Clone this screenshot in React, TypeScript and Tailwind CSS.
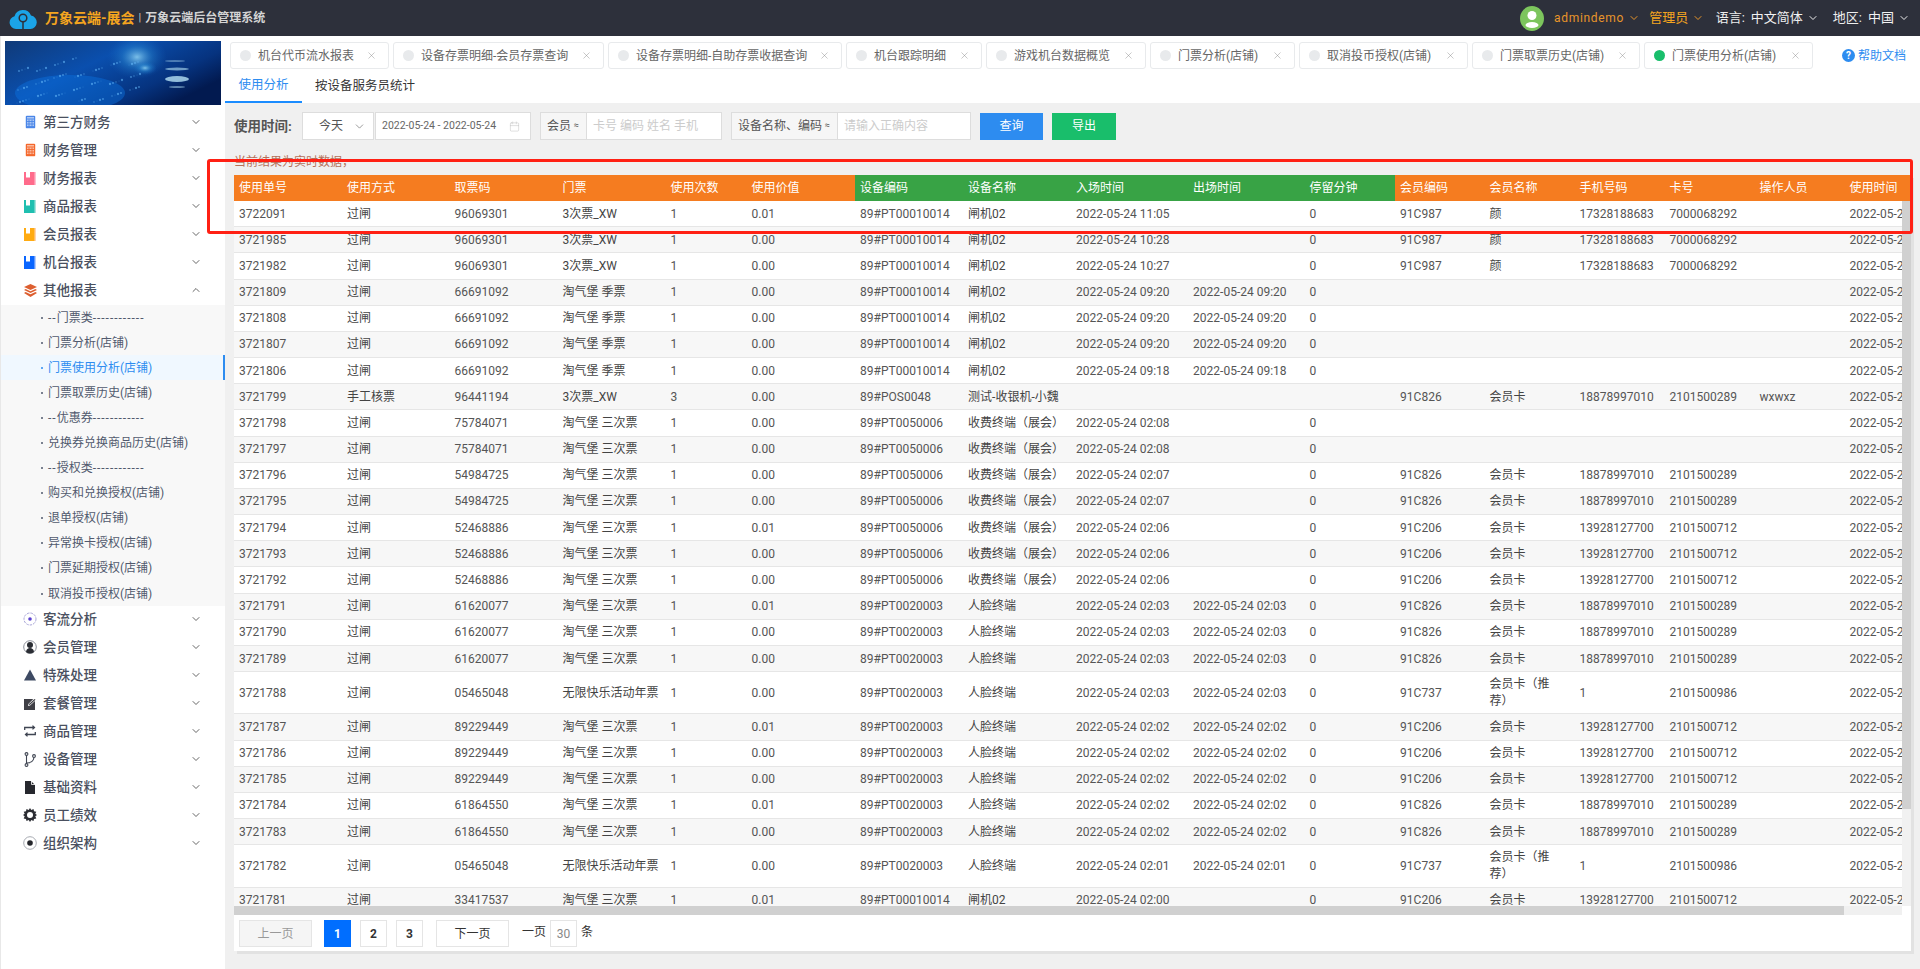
import React from "react";
import { Calendar, ChevronDown, ChevronUp, X } from "lucide-react";

const Calc = ({ c }: { c: string }) => (
  <svg width="11" height="14" viewBox="0 0 11 14">
    <rect x="0.5" y="0.5" width="10" height="13" rx="1.5" fill={c} opacity="0.45" />
    <rect x="1.5" y="1.5" width="8" height="11" fill="none" stroke={c} />
    <path d="M2 4h7M2 6.5h7M2 9h7M2 11.5h7M4 4.5v7M7 4.5v7" stroke={c} strokeWidth="0.9" />
  </svg>
);

const Book = ({ c, l }: { c: string; l: string }) => (
  <svg width="12" height="13" viewBox="0 0 12 13">
    <rect width="12" height="13" fill={l} />
    <rect width="10.5" height="13" fill={c} />
    <rect x="2" y="0" width="4" height="5.5" fill="#fff" />
  </svg>
);

const D = "#3f4552";
const menuIcons: Record<string, React.ReactNode> = {
  第三方财务: <Calc c="#4a86e8" />,
  财务管理: <Calc c="#f4682c" />,
  财务报表: <Book c="#ff6b8b" l="#ffc0cf" />,
  商品报表: <Book c="#1fbfb0" l="#a8e3dd" />,
  会员报表: <Book c="#ffab12" l="#ffd3b0" />,
  机台报表: <Book c="#0a66ff" l="#b7cdfb" />,
  其他报表: (
    <svg width="13" height="13" viewBox="0 0 13 13" fill="#dd5f30">
      <path d="M6.5 0 13 3 6.5 6 0 3z" />
      <path d="M1.6 5 6.5 7.3 11.4 5 13 6 6.5 9 0 6z" />
      <path d="M1.6 8 6.5 10.3 11.4 8 13 9.1 6.5 13 0 9.1z" />
    </svg>
  ),
  客流分析: (
    <svg width="14" height="14" viewBox="0 0 14 14">
      <circle cx="7" cy="7" r="6" fill="none" stroke="#a9a6d8" strokeDasharray="2.5 1" />
      <circle cx="7" cy="7" r="1.8" fill="#5a3fd0" />
    </svg>
  ),
  会员管理: (
    <svg width="14" height="14" viewBox="0 0 14 14">
      <circle cx="7" cy="7" r="6.3" fill="#fff" stroke="#8b8f98" />
      <circle cx="7" cy="5" r="3" fill="#2a2d33" />
      <path d="M3 12c.4-3 2-4 4-4s3.600 1 4 4a6 6 0 0 1-8 0z" fill="#2a2d33" />
    </svg>
  ),
  特殊处理: (
    <svg width="12" height="12" viewBox="0 0 14 13">
      <path d="M7 0 14 13H0z" fill="#3e4a63" />
    </svg>
  ),
  套餐管理: (
    <svg width="13" height="13" viewBox="0 0 13 13">
      <rect y="2" width="11" height="11" fill="#3f3f46" />
      <path d="m4 9 .4-2L10 1.300 12 3 6 8.600z" fill="#fff" />
      <path d="m4.800 8 .2-1L10.500 2l1 .8L6 7.800z" fill="#3f3f46" />
    </svg>
  ),
  商品管理: (
    <svg width="12" height="12" viewBox="0 0 12 12" fill="none" stroke={D} strokeWidth="1.3">
      <path d="M.7 5V2.500h9.500M8.500.6l2 1.900-2 1.900M11.300 7v2.500H1.800M3.500 7.600l-2 1.900 2 1.900" />
    </svg>
  ),
  设备管理: (
    <svg width="12" height="15" viewBox="0 0 12 15" fill="none" stroke={D} strokeWidth="1.1">
      <circle cx="2.500" cy="2" r="1.400" />
      <circle cx="2.500" cy="13" r="1.400" />
      <circle cx="10" cy="4" r="1.400" />
      <path d="M2.500 3.500v8M2.500 11c5 0 7-2 7.500-5.500" />
    </svg>
  ),
  基础资料: (
    <svg width="10" height="13" viewBox="0 0 10 13">
      <path d="M0 0h6l4 4v9H0z" fill="#26282e" />
      <path d="M6.500 0v3.500H10" fill="none" stroke="#fff" strokeWidth="0.8" />
    </svg>
  ),
  员工绩效: (
    <svg width="14" height="14" viewBox="0 0 14 14">
      <path d="M7 0 8.300 2 10.500 1 11 3.200 13.300 3.700 12.300 5.800 14 7 12.300 8.300 13.300 10.400 11 10.900 10.500 13 8.300 12.100 7 14 5.700 12.100 3.500 13 3 10.900.7 10.400 1.700 8.300 0 7 1.700 5.800.7 3.700 3 3.200 3.500 1 5.700 2z" fill="#2b2d33" />
      <circle cx="7" cy="7" r="3" fill="#fff" />
    </svg>
  ),
  组织架构: (
    <svg width="14" height="14" viewBox="0 0 14 14">
      <circle cx="7" cy="7" r="6.300" fill="#fff" stroke="#a8abb2" />
      <circle cx="7" cy="7" r="2.800" fill="#24262b" />
    </svg>
  ),
};

const topMenus = ["第三方财务", "财务管理", "财务报表", "商品报表", "会员报表", "机台报表"];
const bottomMenus = ["客流分析", "会员管理", "特殊处理", "套餐管理", "商品管理", "设备管理", "基础资料", "员工绩效", "组织架构"];
const subMenus = [
  { label: "门票类", dash: true },
  { label: "门票分析(店铺)" },
  { label: "门票使用分析(店铺)", active: true },
  { label: "门票取票历史(店铺)" },
  { label: "优惠券", dash: true },
  { label: "兑换券兑换商品历史(店铺)" },
  { label: "授权类", dash: true },
  { label: "购买和兑换授权(店铺)" },
  { label: "退单授权(店铺)" },
  { label: "异常换卡授权(店铺)" },
  { label: "门票延期授权(店铺)" },
  { label: "取消投币授权(店铺)" },
];

const tabs = [
  { label: "机台代币流水报表", w: "w-[159px]" },
  { label: "设备存票明细-会员存票查询", w: "w-[211px]" },
  { label: "设备存票明细-自助存票收据查询", w: "w-[234px]" },
  { label: "机台跟踪明细", w: "w-[136px]" },
  { label: "游戏机台数据概览", w: "w-[160px]" },
  { label: "门票分析(店铺)", w: "w-[145px]" },
  { label: "取消投币授权(店铺)", w: "w-[169px]" },
  { label: "门票取票历史(店铺)", w: "w-[168px]" },
  { label: "门票使用分析(店铺)", w: "w-[169px]", active: true },
];

const columns = [
  { t: "使用单号", c: "bg-[#f57c20]" },
  { t: "使用方式", c: "bg-[#f57c20]" },
  { t: "取票码", c: "bg-[#f57c20]" },
  { t: "门票", c: "bg-[#f57c20]" },
  { t: "使用次数", c: "bg-[#f57c20]" },
  { t: "使用价值", c: "bg-[#f57c20]" },
  { t: "设备编码", c: "bg-[#38a345]" },
  { t: "设备名称", c: "bg-[#38a345]" },
  { t: "入场时间", c: "bg-[#38a345]" },
  { t: "出场时间", c: "bg-[#38a345]" },
  { t: "停留分钟", c: "bg-[#38a345]" },
  { t: "会员编码", c: "bg-[#f57c20]" },
  { t: "会员名称", c: "bg-[#f57c20]" },
  { t: "手机号码", c: "bg-[#f57c20]" },
  { t: "卡号", c: "bg-[#f57c20]" },
  { t: "操作人员", c: "bg-[#f57c20]" },
  { t: "使用时间", c: "bg-[#f57c20]" },
];

const gridCols =
  "grid grid-cols-[108px_107.5px_108px_108px_81px_108.6px_108px_108px_117px_116.5px_90.500px_89.500px_90px_90px_90px_90px_100px]";

const yan = ["91C987", "颜", "17328188683", "7000068292"];
const m826 = ["91C826", "会员卡", "18878997010", "2101500289"];
const m206 = ["91C206", "会员卡", "13928127700", "2101500712"];
const m737 = ["91C737", "会员卡（推荐）", "1", "2101500986"];
const none = ["", "", "", ""];
const gate = ["89#PT00010014", "闸机02"];
const fee = ["89#PT0050006", "收费终端（展会）"];
const face = ["89#PT0020003", "人脸终端"];
const day = "2022-05-24 ";

const row = (
  no: string,
  code: string,
  ticket: string,
  value: string,
  dev: string[],
  tin: string,
  tout: string,
  mem: string[]
) => ["372" + no, "过闸", code, ticket, "1", value, ...dev, day + tin, tout && day + tout, "0", ...mem, "", day + tin];

const j = "淘气堡 季票";
const s = "淘气堡 三次票";
const w = "3次票_XW";
const u = "无限快乐活动年票";

const rows: string[][] = [
  row("2091", "96069301", w, "0.01", gate, "11:05", "", yan),
  row("1985", "96069301", w, "0.00", gate, "10:28", "", yan),
  row("1982", "96069301", w, "0.00", gate, "10:27", "", yan),
  row("1809", "66691092", j, "0.00", gate, "09:20", "09:20", none),
  row("1808", "66691092", j, "0.00", gate, "09:20", "09:20", none),
  row("1807", "66691092", j, "0.00", gate, "09:20", "09:20", none),
  row("1806", "66691092", j, "0.00", gate, "09:18", "09:18", none),
  ["3721799", "手工核票", "96441194", w, "3", "0.00", "89#POS0048", "测试-收银机-小魏", "", "", "", ...m826, "wxwxz", day + "01:50"],
  row("1798", "75784071", s, "0.00", fee, "02:08", "", none),
  row("1797", "75784071", s, "0.00", fee, "02:08", "", none),
  row("1796", "54984725", s, "0.00", fee, "02:07", "", m826),
  row("1795", "54984725", s, "0.00", fee, "02:07", "", m826),
  row("1794", "52468886", s, "0.01", fee, "02:06", "", m206),
  row("1793", "52468886", s, "0.00", fee, "02:06", "", m206),
  row("1792", "52468886", s, "0.00", fee, "02:06", "", m206),
  row("1791", "61620077", s, "0.01", face, "02:03", "02:03", m826),
  row("1790", "61620077", s, "0.00", face, "02:03", "02:03", m826),
  row("1789", "61620077", s, "0.00", face, "02:03", "02:03", m826),
  row("1788", "05465048", u, "0.00", face, "02:03", "02:03", m737),
  row("1787", "89229449", s, "0.01", face, "02:02", "02:02", m206),
  row("1786", "89229449", s, "0.00", face, "02:02", "02:02", m206),
  row("1785", "89229449", s, "0.00", face, "02:02", "02:02", m206),
  row("1784", "61864550", s, "0.01", face, "02:02", "02:02", m826),
  row("1783", "61864550", s, "0.00", face, "02:02", "02:02", m826),
  row("1782", "05465048", u, "0.00", face, "02:01", "02:01", m737),
  row("1781", "33417537", s, "0.01", gate, "02:00", "", m206),
];

const stars = Array.from({ length: 90 }, (_, i) => ({
  x: (i * 37) % 130 + 6,
  y: 64 - ((i * 23) % 44) - (i % 3) * 2,
  r: 0.4 + (i % 4) * 0.25,
}));

const Banner = () => (
  <svg width="216" height="64" viewBox="0 0 216 64" className="block">
    <defs>
      <linearGradient id="bannerBg" x1="0" y1="0" x2="1" y2="0.6">
        <stop offset="0" stopColor="#103a78" />
        <stop offset="0.45" stopColor="#0a4fae" />
        <stop offset="0.8" stopColor="#06337f" />
        <stop offset="1" stopColor="#021a50" />
      </linearGradient>
      <radialGradient id="bannerGlow">
        <stop offset="0" stopColor="#8fd4f5" stopOpacity="0.85" />
        <stop offset="0.5" stopColor="#2d8fd8" stopOpacity="0.4" />
        <stop offset="1" stopColor="#1565c0" stopOpacity="0" />
      </radialGradient>
    </defs>
    <rect width="216" height="64" fill="url(#bannerBg)" />
    <ellipse cx="65" cy="52" rx="55" ry="18" fill="#0a70e0" opacity="0.45" />
    <ellipse cx="132" cy="16" rx="30" ry="22" fill="url(#bannerGlow)" />
    <ellipse cx="140" cy="27" rx="12" ry="7" fill="url(#bannerGlow)" />
    <ellipse cx="172" cy="38" rx="12" ry="3" fill="#b6e2f5" opacity="0.8" />
    <ellipse cx="172" cy="28" rx="12" ry="1.5" fill="#b6e2f5" opacity="0.6" />
    <ellipse cx="170" cy="20" rx="10" ry="1" fill="#b6e2f5" opacity="0.4" />
    <ellipse cx="172" cy="46" rx="8" ry="1" fill="#b6e2f5" opacity="0.5" />
    {stars.map((d, i) => (
      <circle key={i} cx={d.x} cy={d.y} r={d.r} fill="#6cc0ff" opacity={0.55} />
    ))}
  </svg>
);

const Logo = () => (
  <svg width="28" height="21" viewBox="0 0 28 21">
    <path d="M7 21a6.500 6.500 0 0 1-1.500-12.800A8.800 8.800 0 0 1 22 7.500 6.800 6.800 0 0 1 21.500 21z" fill="#1ba4e8" />
    <circle cx="14" cy="10" r="3.800" fill="none" stroke="#2d303b" strokeWidth="1.500" />
    <path d="M14 14v7" stroke="#2d303b" strokeWidth="1.500" />
  </svg>
);

const Head = () => (
  <header className="flex h-[36px] items-center justify-between bg-[#2d303b]">
    <div className="flex items-center pl-[9px]">
      <Logo />
      <span className="ml-[8px] text-[14px] font-bold text-[#f5a51f]">万象云端-展会</span>
      <span className="ml-[4px] text-[11px] text-[#c9c9c9]">|</span>
      <span className="ml-[4px] text-[12px] font-bold text-[#d4d4d4]">万象云端后台管理系统</span>
    </div>
    <div className="flex items-center pr-[10px] text-[13px]">
      <svg width="24" height="25" viewBox="0 0 24 25">
        <ellipse cx="12" cy="12.500" rx="12" ry="12.500" fill="#7cc55d" />
        <circle cx="12" cy="9.500" r="4.500" fill="#fff" />
        <ellipse cx="12" cy="19" rx="6.500" ry="3" fill="#fff" />
      </svg>
      <span className="ml-[10px] text-[12px] tracking-[0.7px] text-[#e8952a]">admindemo</span>
      <ChevronDown size={12} strokeWidth={2} className="ml-[4px] text-[#e8952a]" />
      <span className="ml-[9px] text-[#f5a51f]">管理员</span>
      <ChevronDown size={12} strokeWidth={2} className="ml-[4px] text-[#e8952a]" />
      <span className="ml-[11.500px] text-[#eee]">语言:</span>
      <span className="ml-[6px] text-[#f2f2f2]">中文简体</span>
      <ChevronDown size={12} strokeWidth={2} className="ml-[4px] text-[#eee]" />
      <span className="ml-[14px] text-[#eee]">地区:</span>
      <span className="ml-[6px] text-[#f2f2f2]">中国</span>
      <ChevronDown size={12} strokeWidth={2} className="ml-[4px] text-[#eee]" />
    </div>
  </header>
);

const MenuItem = ({ name, open }: { name: string; open?: boolean }) => (
  <div className="flex h-[28px] items-center text-[13.5px] font-medium text-[#4a5060]">
    <span className="ml-[24px] flex w-[18px] -translate-x-[4px] justify-center">{menuIcons[name]}</span>
    <span>{name}</span>
    <span className="ml-auto mr-[23px] text-[#555]">
      {open ? <ChevronUp size={12} strokeWidth={1.800} /> : <ChevronDown size={12} strokeWidth={1.800} />}
    </span>
  </div>
);

const Sidebar = () => (
  <aside className="flex w-[225px] shrink-0 flex-col border-l border-[#e8e8e8] bg-white pt-[5px]">
    <div className="pl-[4px]">
      <Banner />
    </div>
    <div className="mt-[3px]">
      {topMenus.map((n) => (
        <MenuItem key={n} name={n} />
      ))}
      <MenuItem name="其他报表" open />
      <div className="mt-px bg-[#f8f8f8]">
        {subMenus.map((m) => (
          <div
            key={m.label}
            className={
              m.active
                ? "flex h-[25.1px] items-center border-r-2 border-[#2d8cf0] bg-[#f0f8ff] pl-[40px] text-[12px] text-[#2d8cf0]"
                : "flex h-[25.1px] items-center pl-[40px] text-[12px] text-[#515a6e]"
            }
          >
            <span className="mr-[5px] h-[2px] w-[2px] rounded-full bg-current" />
            {m.dash ? (
              <span>
                <span className="tracking-[1px]">--</span>
                {m.label}
                <span className="tracking-[1px]">------------</span>
              </span>
            ) : (
              m.label
            )}
          </div>
        ))}
      </div>
      <div className="-mt-px">
        {bottomMenus.map((n) => (
          <MenuItem key={n} name={n} />
        ))}
      </div>
    </div>
  </aside>
);

const TabBar = () => (
  <div className="bg-white">
    <div className="flex h-[33px] items-end pl-[5px]">
      <div className="flex gap-[4px]">
        {tabs.map((t) => (
          <div
            key={t.label}
            className={`flex h-[27px] items-center rounded-[3px] border border-[#e8eaec] pl-[9px] pr-[11px] text-[12px] text-[#666] ${t.w}`}
          >
            <span className={t.active ? "h-[11px] w-[11px] rounded-full bg-[#19be6b]" : "h-[11px] w-[11px] rounded-full bg-[#e8eaec]"} />
            <span className="ml-[7px] whitespace-nowrap">{t.label}</span>
            <X size={11} strokeWidth={1} className="ml-auto text-[#888]" />
          </div>
        ))}
      </div>
      <div className="ml-auto mr-[14px] flex h-[27px] items-center text-[12px] text-[#2d8cf0]">
        <span className="mr-[3px] flex h-[13px] w-[13px] items-center justify-center rounded-full bg-[#2d8cf0] text-[10px] font-bold text-white">?</span>
        帮助文档
      </div>
    </div>
    <div className="flex h-[34px] text-[12.5px]">
      <div className="flex w-[77px] items-center justify-center border-b-2 border-[#1a8cff] text-[#2d8cf0]">使用分析</div>
      <div className="ml-[13px] flex items-center text-[#333]">按设备服务员统计</div>
    </div>
  </div>
);

const Filters = () => (
  <div className="mt-[9px] flex h-[28px] items-center pl-[9px] text-[12px] text-[#555]">
    <span className="w-[68px] text-[13.5px] font-bold text-[#555]">使用时间:</span>
    <div className="flex h-[28px] w-[72px] items-center border border-[#ddd] bg-white pl-[16px]">
      今天
      <ChevronDown size={13} strokeWidth={1.200} className="ml-[10px] text-[#666]" />
    </div>
    <div className="ml-px flex h-[28px] w-[156px] items-center border border-[#ddd] bg-white pl-[6px] text-[10.5px] text-[#666]">
      2022-05-24 - 2022-05-24
      <Calendar size={11} strokeWidth={1} className="ml-auto mr-[10px] text-[#bbb]" />
    </div>
    <div className="ml-[9px] flex h-[28px] w-[182px] border border-[#ddd] bg-white">
      <div className="flex w-[46px] items-center border-r border-[#ddd] bg-[#f6f6f6] pl-[6px]">
        会员<span className="ml-[3px] text-[9px]">≈</span>
      </div>
      <div className="flex items-center pl-[6px] text-[#ccc]">卡号 编码 姓名 手机</div>
    </div>
    <div className="ml-[9px] flex h-[28px] w-[240px] border border-[#ddd] bg-white">
      <div className="flex w-[106px] items-center whitespace-nowrap border-r border-[#ddd] bg-[#f6f6f6] pl-[6px]">
        设备名称、编码<span className="ml-[3px] text-[9px]">≈</span>
      </div>
      <div className="flex items-center pl-[6px] text-[#ccc]">请输入正确内容</div>
    </div>
    <button className="ml-[9px] h-[27px] w-[63px] bg-[#2d8cf0] text-[12px] text-white">查询</button>
    <button className="ml-[9px] h-[27px] w-[64px] bg-[#19be6b] text-[12px] text-white">导出</button>
  </div>
);

const Table = () => (
  <div className="w-[1677px] bg-white shadow-[3px_3px_0_#e2e2e2]">
    <div className={`${gridCols} h-[26px] overflow-hidden text-[12px] text-white`}>
      {columns.map((c) => (
        <div key={c.t} className={`flex items-center pl-[5px] ${c.c}`}>
          {c.t}
        </div>
      ))}
    </div>
    <div className="flex h-[705px]">
      <div className="w-[1668px] overflow-hidden">
        {rows.map((r, i) => {
          const tall = r[12].length > 3;
          return (
            <div
              key={r[0]}
              className={`${gridCols} ${tall ? "h-[42.3px]" : "h-[26.18px]"} ${i % 2 ? "bg-[#f7f7f7]" : "bg-white"} border-b border-[#e6e6e6] text-[12px] text-[#555]`}
            >
              {r.map((v, k) => (
                <div key={k} className="flex items-center overflow-hidden whitespace-nowrap pl-[5px]">
                  {k === 12 && tall ? (
                    <span className="leading-[17px] text-[#444]">
                      会员卡（推
                      <br />
                      荐）
                    </span>
                  ) : (
                    <span className={k === 1 || k === 3 || k === 7 || k === 12 ? "text-[#444]" : ""}>{v}</span>
                  )}
                </div>
              ))}
            </div>
          );
        })}
      </div>
      <div className="w-[9px] bg-[#f1f1f1]">
        <div className="h-[608px] bg-[#d0d0d0]" />
      </div>
    </div>
    <div className="flex h-[9px] w-[1668px] bg-[#f0f0f0]">
      <div className="w-[1610px] bg-[#d0d0d0]" />
    </div>
    <div className="flex h-[36px] items-start pl-[5px] pt-[5px] text-[12px] text-[#333]">
      <div className="flex h-[27px] w-[73px] items-center justify-center border border-[#e5e5e5] bg-[#f5f5f5] text-[#999]">上一页</div>
      <div className="ml-[12px] flex h-[27px] w-[27px] items-center justify-center bg-[#006eff] font-bold text-white">1</div>
      <div className="ml-[9px] flex h-[27px] w-[27px] items-center justify-center border border-[#e5e5e5] font-bold">2</div>
      <div className="ml-[9px] flex h-[27px] w-[27px] items-center justify-center border border-[#e5e5e5] font-bold">3</div>
      <div className="ml-[13px] flex h-[27px] w-[73px] items-center justify-center border border-[#e5e5e5]">下一页</div>
      <span className="ml-[13px] leading-[24px]">一页</span>
      <div className="ml-[4px] flex h-[27px] w-[27px] items-center justify-center border border-[#e5e5e5] text-[#888]">30</div>
      <span className="ml-[4px] leading-[24px]">条</span>
    </div>
  </div>
);

export default function App() {
  return (
    <div className="relative h-[969px] w-[1920px] overflow-hidden bg-[#f0f0f0] font-['Roboto','Noto_Sans_CJK_SC',sans-serif]">
      <Head />
      <div className="flex h-[933px]">
        <Sidebar />
        <main className="flex-1">
          <TabBar />
          <Filters />
          <p className="ml-[9px] mt-[14px] h-[17px] text-[12px] leading-[17px] text-[#b5705a]">当前结果为实时数据，</p>
          <div className="ml-[9px] mt-[4px]">
            <Table />
          </div>
        </main>
      </div>
      <div className="pointer-events-none absolute left-[207px] top-[159px] h-[75px] w-[1706px] rounded-[3px] border-[3px] border-[#ff2014]" />
    </div>
  );
}
